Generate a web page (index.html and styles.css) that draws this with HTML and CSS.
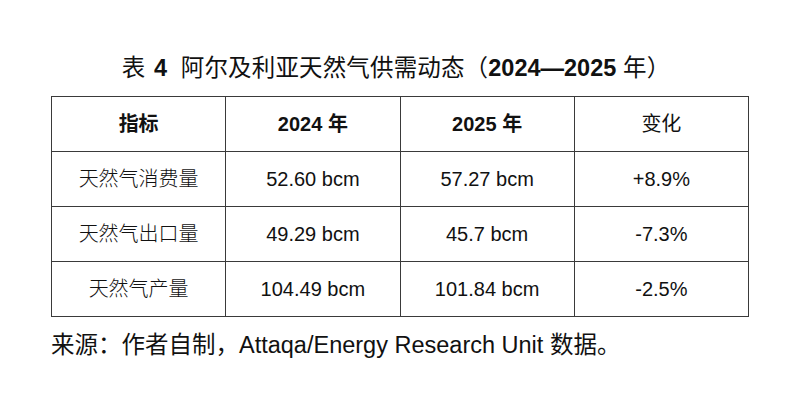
FILE: index.html
```html
<!DOCTYPE html>
<html lang="zh-CN">
<head>
<meta charset="utf-8">
<title>表 4 阿尔及利亚天然气供需动态</title>
<link rel="stylesheet" href="styles.css">
</head>
<body>
<div class="page">
  <h1 class="title">表 <b class="num">4</b> 阿尔及利亚天然气供需动态（<b>2024—2025</b> 年）</h1>
  <table class="data">
    <thead>
      <tr>
        <th class="bold">指标</th>
        <th class="bold">2024 年</th>
        <th class="bold">2025 年</th>
        <th class="plain">变化</th>
      </tr>
    </thead>
    <tbody>
      <tr><td>天然气消费量</td><td>52.60 bcm</td><td>57.27 bcm</td><td>+8.9%</td></tr>
      <tr><td>天然气出口量</td><td>49.29 bcm</td><td>45.7 bcm</td><td>-7.3%</td></tr>
      <tr><td>天然气产量</td><td>104.49 bcm</td><td>101.84 bcm</td><td>-2.5%</td></tr>
    </tbody>
  </table>
  <p class="source">来源：作者自制，Attaqa/Energy Research Unit 数据。</p>
</div>
</body>
</html>
```
FILE: styles.css
```css
html, body {
  margin: 0;
  padding: 0;
  background: #ffffff;
}
body {
  font-family: "Liberation Sans", "Noto Sans CJK SC", sans-serif;
  color: #111111;
}
.page {
  width: 800px;
  height: 411px;
  padding-top: 52px;
  box-sizing: border-box;
  display: flex;
  flex-direction: column;
  align-items: center;
}
.title {
  margin: 0 8px 0 0;
  font-size: 23.5px;
  line-height: 32px;
  font-weight: 400;
  letter-spacing: 0.15px;
  white-space: nowrap;
}
.title b {
  font-weight: 700;
  letter-spacing: 0;
}
.title .num {
  margin: 0 7px 0 2px;
}
.data {
  margin-top: 12px;
  width: 698px;
  table-layout: fixed;
  border-collapse: collapse;
  font-size: 20px;
}
.data th,
.data td {
  border: 1px solid #3a3a3a;
  height: 54px;
  padding: 0;
  text-align: center;
  vertical-align: middle;
  line-height: 24px;
}
.data td {
  font-weight: 300;
}
.data th.bold {
  font-weight: 700;
}
.data th.plain {
  font-weight: 400;
}
.source {
  align-self: flex-start;
  margin: 12px 0 0 51px;
  font-size: 23.5px;
  line-height: 32px;
  white-space: nowrap;
}
```
